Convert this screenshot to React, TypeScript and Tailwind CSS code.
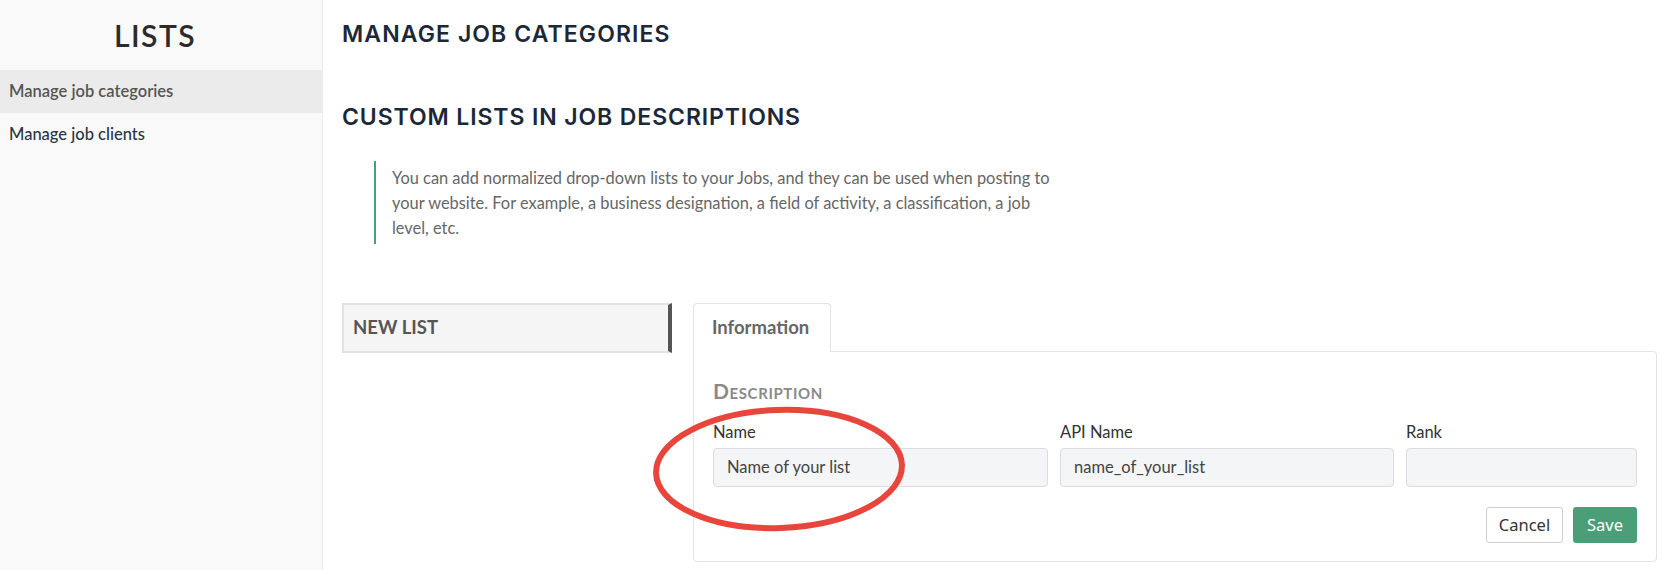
import React from "react";

export default function App() {
  const lato = { fontFamily: "Lato, 'Open Sans', sans-serif" } as React.CSSProperties;
  return (
    <div className="relative flex w-[1662px] h-[570px] bg-white overflow-hidden font-['Lato',sans-serif]">
      {/* Sidebar */}
      <aside className="w-[323px] shrink-0 bg-[#f9f9f9] border-r border-[#ececec] h-full">
        <div className="h-[70px] flex items-center justify-center pr-[12px]">
          <h2 className="text-[30px] font-semibold text-[#2b2b2b] tracking-[1.5px] leading-none">LISTS</h2>
        </div>
        <div className="h-[43px] flex items-center px-[9px] bg-[#ebebeb] text-[16.5px] font-semibold text-[#555]">
          Manage job categories
        </div>
        <div className="h-[43px] flex items-center px-[9px] text-[16.5px] font-medium text-[#2b3542]">
          Manage job clients
        </div>
      </aside>

      {/* Main */}
      <main className="flex-1 pl-[19px] pr-[5px]" style={lato}>
        <h1 className="mt-[20px] leading-[28px] text-[23px] font-semibold text-[#1c2838] tracking-[1.1px] font-['Inter',sans-serif]">
          MANAGE JOB CATEGORIES
        </h1>
        <h1 className="mt-[55px] leading-[28px] text-[23px] font-semibold text-[#1c2838] tracking-[0.9px] font-['Inter',sans-serif]">
          CUSTOM LISTS IN JOB DESCRIPTIONS
        </h1>

        <div className="mt-[30px] ml-[32px] border-l-2 border-[#4a9f78] pl-[16px] py-[4px]">
          <p className="w-[668px] text-[16.4px] leading-[25px] text-[#666]">
            You can add normalized drop-down lists to your Jobs, and they can be used when posting to your website. For example, a business designation, a field of activity, a classification, a job level, etc.
          </p>
        </div>

        <div className="mt-[59px] flex items-start gap-[21px]">
          <div className="w-[330px] h-[50px] shrink-0 bg-[#f5f5f5] border-2 border-r-4 border-[#e2e2e2] border-r-[#555] flex items-center pl-[9px]">
            <span className="text-[18.5px] font-bold text-[#555]">NEW LIST</span>
          </div>

          <div className="w-[964px]">
            <div className="flex">
              <div className="w-[138px] h-[49px] bg-white border border-b-0 border-[#e3e3e3] rounded-t-[4px] flex items-center px-[18px] -mb-px relative z-10">
                <span className="text-[18.5px] font-bold text-[#666]">Information</span>
              </div>
            </div>
            <div className="border border-[#e3e3e3] rounded-b-[4px] rounded-tr-[4px] px-[19px] pt-[25px] pb-[18px]">
              <div className="text-[21px] font-bold text-[#8a8a8a] [font-variant:small-caps] leading-[28px] tracking-[0.6px]">
                Description
              </div>
              <div className="mt-[17px] flex gap-[12px]">
                <div className="w-[335px]">
                  <div className="text-[16.5px] leading-[20px] text-[#333] mb-[6px]">Name</div>
                  <div className="h-[39px] rounded-[4px] border border-[#dcdde0] bg-[#f4f5f7] flex items-center px-[13px] text-[16.5px] text-[#444]">
                    Name of your list
                  </div>
                </div>
                <div className="w-[334px]">
                  <div className="text-[16.5px] leading-[20px] text-[#333] mb-[6px]">API Name</div>
                  <div className="h-[39px] rounded-[4px] border border-[#dcdde0] bg-[#f4f5f7] flex items-center px-[13px] text-[16.5px] text-[#444]">
                    name_of_your_list
                  </div>
                </div>
                <div className="flex-1">
                  <div className="text-[16.5px] leading-[20px] text-[#333] mb-[6px]">Rank</div>
                  <div className="h-[39px] rounded-[4px] border border-[#dcdde0] bg-[#f4f5f7]"></div>
                </div>
              </div>
              <div className="mt-[20px] flex justify-end gap-[10px]">
                <button className="w-[77px] h-[36px] rounded-[3px] border border-[#cfcfcf] bg-white text-[16.5px] text-[#333] font-['Noto_Sans',sans-serif]">
                  Cancel
                </button>
                <button className="w-[64px] h-[36px] rounded-[3px] bg-[#4a9f78] text-[16.5px] text-white font-['Noto_Sans',sans-serif]">
                  Save
                </button>
              </div>
            </div>
          </div>
        </div>
      </main>

      {/* Red annotation ellipse */}
      <svg className="absolute left-[640px] top-[400px] pointer-events-none" width="280" height="145" viewBox="0 0 280 145">
        <ellipse cx="139" cy="69" rx="123" ry="59" fill="none" stroke="#e8453c" strokeWidth="6" transform="rotate(-2 139 69)" />
      </svg>
    </div>
  );
}
